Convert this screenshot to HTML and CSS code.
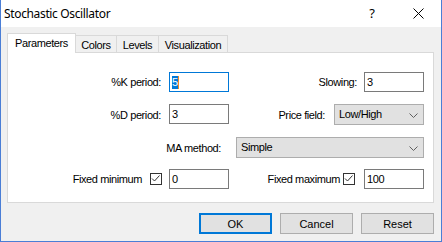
FILE: index.html
```html
<!DOCTYPE html>
<html>
<head>
<meta charset="utf-8">
<link rel="stylesheet" href="styles.css">
</head>
<body>
<div class="window">
  <div class="titlebar">
    <span class="title">Stochastic Oscillator</span>
    <span class="caption-btn help">?</span>
    <span class="caption-btn close">
      <svg width="11" height="11" viewBox="0 0 11 11"><path d="M0.5 0.5 L10.5 10.5 M10.5 0.5 L0.5 10.5" stroke="#000" stroke-width="1" fill="none"/></svg>
    </span>
  </div>
  <div class="content">
    <div class="tabs">
      <div class="tab active">Parameters</div>
      <div class="tab tab-colors">Colors</div>
      <div class="tab tab-levels">Levels</div>
      <div class="tab tab-vis">Visualization</div>
    </div>
    <div class="panel">
      <div class="grid">
        <div class="cell r20"><span class="label">%K period:</span><span class="field focused"><span class="sel">5</span><span class="caret"></span></span></div>
        <div class="cell r20"><span class="label">Slowing:</span><span class="field gap7">3</span></div>

        <div class="cell r21"><span class="label">%D period:</span><span class="field top">3</span></div>
        <div class="cell r21"><span class="label">Price field:</span><span class="combo w90 gap9"><span class="combo-text">Low/High</span><svg class="chev" width="9" height="5" viewBox="0 0 9 5"><polyline points="0.5,0.5 4.5,4.5 8.5,0.5" fill="none" stroke="#606060" stroke-width="1"/></svg></span></div>

        <div class="cell r21"><span class="label">MA method:</span></div>
        <div class="cell r21"><span class="combo w188"><span class="combo-text">Simple</span><svg class="chev" width="9" height="5" viewBox="0 0 9 5"><polyline points="0.5,0.5 4.5,4.5 8.5,0.5" fill="none" stroke="#606060" stroke-width="1"/></svg></span></div>

        <div class="cell r20"><span class="label">Fixed minimum</span><span class="check cb-left"><svg width="12" height="12" viewBox="0 0 12 12"><path d="M2 5.5 L4.5 8 L9.5 2.5" fill="none" stroke="#333" stroke-width="1"/></svg></span><span class="field">0</span></div>
        <div class="cell r20"><span class="label">Fixed maximum</span><span class="check cb-right"><svg width="12" height="12" viewBox="0 0 12 12"><path d="M2 5.5 L4.5 8 L9.5 2.5" fill="none" stroke="#333" stroke-width="1"/></svg></span><span class="field">100</span></div>
      </div>
    </div>
    <div class="buttons">
      <span class="btn default">OK</span>
      <span class="btn">Cancel</span>
      <span class="btn">Reset</span>
    </div>
  </div>
</div>
</body>
</html>
```
FILE: styles.css
```css
html, body {
  margin: 0;
  padding: 0;
  background: #fff;
}
body {
  font-family: "Liberation Sans", Arial, sans-serif;
  font-size: 11px;
  color: #000;
  letter-spacing: -0.4px;
}
.window {
  width: 442px;
  height: 242px;
  box-sizing: border-box;
  border: 1px solid #4a7ed6;
  border-top: none;
  background: #f0f0f0;
  display: flex;
  flex-direction: column;
}
.titlebar {
  flex: none;
  height: 27px;
  background: #fff;
  display: flex;
  align-items: center;
}
.title {
  flex: 1;
  padding-left: 3px;
  font-family: "Noto Sans", sans-serif;
  font-size: 12px;
  letter-spacing: -0.35px;
  line-height: 27px;
  padding-bottom: 1px;
}
.caption-btn {
  width: 46px;
  height: 27px;
  display: flex;
  align-items: center;
  justify-content: center;
}
.help {
  font-family: "Noto Sans", sans-serif;
  font-size: 13px;
  letter-spacing: 0;
  padding-bottom: 1px;
}
.close svg {
  display: block;
}
.content {
  flex: 1;
  padding: 6px 7px 0 6px;
  display: flex;
  flex-direction: column;
}
.tabs {
  display: flex;
  align-items: flex-end;
  height: 20px;
}
.tab {
  box-sizing: border-box;
  height: 18px;
  border-top: 1px solid #d9d9d9;
  border-right: 1px solid #d9d9d9;
  padding-top: 3px;
  line-height: 13px;
  text-align: center;
  white-space: nowrap;
}
.tab.active {
  width: 69px;
  height: 20px;
  border-left: 1px solid #d9d9d9;
  background: #fff;
  position: relative;
  z-index: 2;
}
.tab-colors { width: 41px; }
.tab-levels { width: 42px; }
.tab-vis { width: 69px; }
.panel {
  position: relative;
  z-index: 1;
  margin-top: -1px;
  width: 427px;
  height: 151px;
  box-sizing: border-box;
  border: 1px solid #d9d9d9;
  background: #fff;
  padding-top: 19px;
}
.grid {
  display: grid;
  grid-template-columns: 221px 195px;
  grid-template-rows: 32px 33px 32px 21px;
}
.cell {
  display: flex;
  justify-content: flex-end;
  align-items: center;
  align-self: start;
}
.cell.r20 { height: 20px; }
.cell.r21 { height: 21px; }
.label {
  white-space: nowrap;
  margin-right: 7px;
}
.cell:nth-child(odd) .label { margin-right: 8px; }
.field {
  box-sizing: border-box;
  width: 60px;
  height: 20px;
  border: 1px solid #7a7a7a;
  background: #fff;
  padding-left: 2px;
  line-height: 18px;
  display: flex;
  align-items: center;
}
.field.top { align-self: flex-start; }
.field.focused { border-color: #0078d7; }
.sel {
  background: #0078d7;
  color: #fff;
  line-height: 13px;
  height: 13px;
  padding-top: 0px;
}
.caret {
  width: 1px;
  height: 13px;
  background: #f08a24;
}
.combo {
  box-sizing: border-box;
  height: 21px;
  border: 1px solid #adadad;
  background: #e1e1e1;
  display: flex;
  align-items: center;
  padding-left: 4px;
  padding-right: 5px;
}
.combo-text {
  flex: 1;
  line-height: 19px;
}
.chev { display: block; margin-top: 1px; }
.w90 { width: 90px; }
.w188 { width: 188px; }
.gap9 { margin-left: 2px; }
.check {
  box-sizing: border-box;
  width: 12px;
  height: 12px;
  border: 1px solid #333;
  background: #fff;
  position: relative;
}
.check svg {
  display: block;
  margin: -1px 0 0 -1px;
}
.cell:nth-child(odd) .label + .check { margin-left: 0; }
.cb-left { margin-right: 7px; margin-left: 0; }
.cell .label + .cb-right { margin-left: -4px; }
.cb-right { margin-right: 9px; }
.buttons {
  display: flex;
  justify-content: flex-end;
  gap: 8px;
  margin-top: 10px;
}
.btn {
  box-sizing: border-box;
  width: 73px;
  height: 21px;
  border: 1px solid #adadad;
  background: #e1e1e1;
  display: flex;
  align-items: center;
  justify-content: center;
  letter-spacing: 0;
}
.btn.default {
  border: 2px solid #0078d7;
}
```
